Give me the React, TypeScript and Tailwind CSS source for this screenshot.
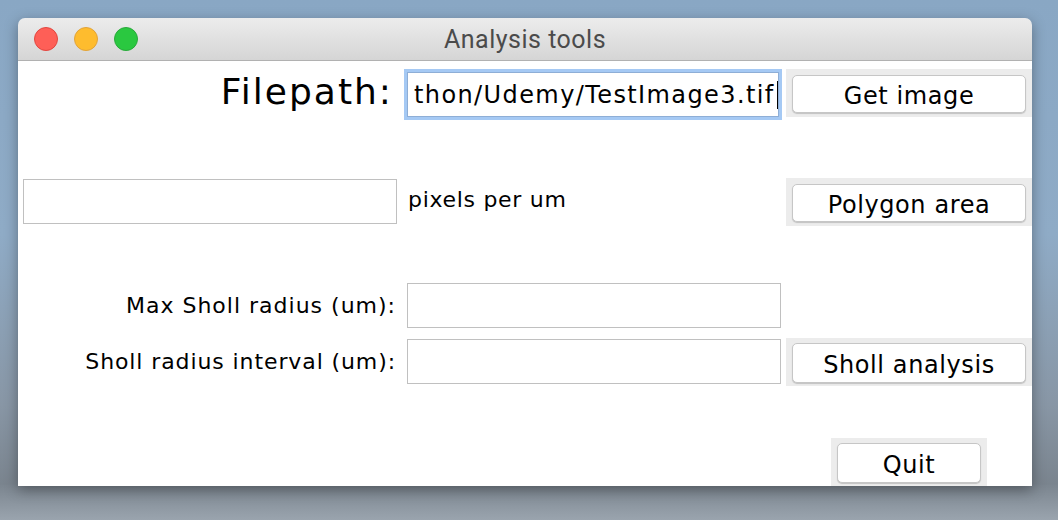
import React from "react";

const font = { fontFamily: '"DejaVu Sans", Verdana, sans-serif' };

function TkButton({ label, w = "w-[234px]" }: { label: string; w?: string }) {
  return (
    <button
      className={`${w} h-[38px] rounded-[5px] border border-[#c6c6c6] bg-white pt-[3px] text-[24px] leading-none tracking-[0.6px] text-black shadow-[0_1px_1px_rgba(0,0,0,0.18)]`}
    >
      {label}
    </button>
  );
}

function Entry({ value, cls = "" }: { value?: string; cls?: string }) {
  return <div className={`h-[45px] border border-[#c0c0c0] bg-white ${cls}`}>{value}</div>;
}

export default function App() {
  return (
    <div
      className="relative h-[520px] w-[1058px] overflow-hidden bg-[linear-gradient(180deg,#89a7c4_0%,#8fabc6_45%,#8896a5_78%,#7a848e_93%,#9aa4ae_100%)] pl-[18px] pt-[18px]"
      style={font}
    >
      {/* window */}
      <div className="w-[1014px] overflow-hidden rounded-t-[7px] shadow-[0_4px_14px_rgba(0,0,0,0.35)]">
        <div className="relative flex h-[43px] items-center border-b border-[#b1b1b1] bg-[linear-gradient(180deg,#ececec,#d5d5d5)] pl-[16px]">
          <div className="flex gap-[16px]">
            <span className="h-[24px] w-[24px] rounded-full border border-[#e2463f] bg-[#fe5f57]" />
            <span className="h-[24px] w-[24px] rounded-full border border-[#e1a33a] bg-[#febc2e]" />
            <span className="h-[24px] w-[24px] rounded-full border border-[#29a93b] bg-[#2ac840]" />
          </div>
          <div
            className="absolute inset-0 flex items-center justify-center pt-[2px] text-[25px] tracking-[0.5px] text-[#4b4b4b]"
            style={{ fontFamily: 'Roboto, "Liberation Sans", sans-serif' }}
          >
            Analysis tools
          </div>
        </div>

        <div className="flex h-[425px] flex-col bg-white text-black">
          {/* row: filepath */}
          <div className="mt-[8px] flex h-[51px] items-center">
            <div className="flex w-[382px] justify-end pb-[6px] pr-[7px] text-[36px] leading-none tracking-[2px]">
              Filepath:
            </div>
            <div className="w-[386px] pl-[4px]">
              <div className="flex h-[51px] w-[378px] items-center border-[3px] border-[#a5c9f4] bg-white">
                <div className="flex h-full w-full items-center overflow-hidden border border-[#8eaed6] pl-[6px] text-[24px] tracking-[1.4px]">
                  <span className="whitespace-nowrap">thon/Udemy/TestImage3.tif</span>
                  <span className="ml-[2px] h-[28px] w-[2px] shrink-0 bg-black" />
                </div>
              </div>
            </div>
            <div className="flex h-[48px] w-[246px] justify-center self-start bg-[#ececec] pt-[6px]">
              <TkButton label="Get image" />
            </div>
          </div>

          {/* row: pixels per um */}
          <div className="mt-[58px] flex h-[48px] items-start">
            <div className="w-[382px] pl-[5px] pt-[1px]">
              <Entry cls="w-[374px]" />
            </div>
            <div className="w-[386px] pl-[8px] pt-[11px] text-[22px] leading-none tracking-[0.7px]">pixels per um</div>
            <div className="flex h-[48px] w-[246px] justify-center bg-[#ececec] pt-[6px]">
              <TkButton label="Polygon area" />
            </div>
          </div>

          {/* row: max sholl radius */}
          <div className="mt-[57px] flex h-[45px] items-center">
            <div className="flex w-[382px] justify-end pr-[4px] text-[22px] leading-none tracking-[1px]">
              Max Sholl radius (um):
            </div>
            <div className="w-[386px] pl-[7px]">
              <Entry cls="w-[374px]" />
            </div>
          </div>

          {/* row: sholl interval */}
          <div className="mt-[10px] flex h-[48px] items-start">
            <div className="flex h-[47px] w-[382px] items-center justify-end pr-[4px] text-[22px] leading-none tracking-[0.9px]">
              Sholl radius interval (um):
            </div>
            <div className="w-[386px] pl-[7px] pt-[1px]">
              <Entry cls="w-[374px]" />
            </div>
            <div className="flex h-[48px] w-[246px] justify-center bg-[#ececec] pt-[5px]">
              <TkButton label="Sholl analysis" w="w-[234px] h-[40px]" />
            </div>
          </div>

          {/* row: quit */}
          <div className="mt-[52px] flex h-[48px]">
            <div className="w-[768px]" />
            <div className="flex w-[246px] justify-center">
              <div className="flex h-[48px] w-[156px] justify-center bg-[#ececec] pt-[5px]">
                <TkButton label="Quit" w="w-[144px] h-[40px]" />
              </div>
            </div>
          </div>
        </div>
      </div>
    </div>
  );
}
